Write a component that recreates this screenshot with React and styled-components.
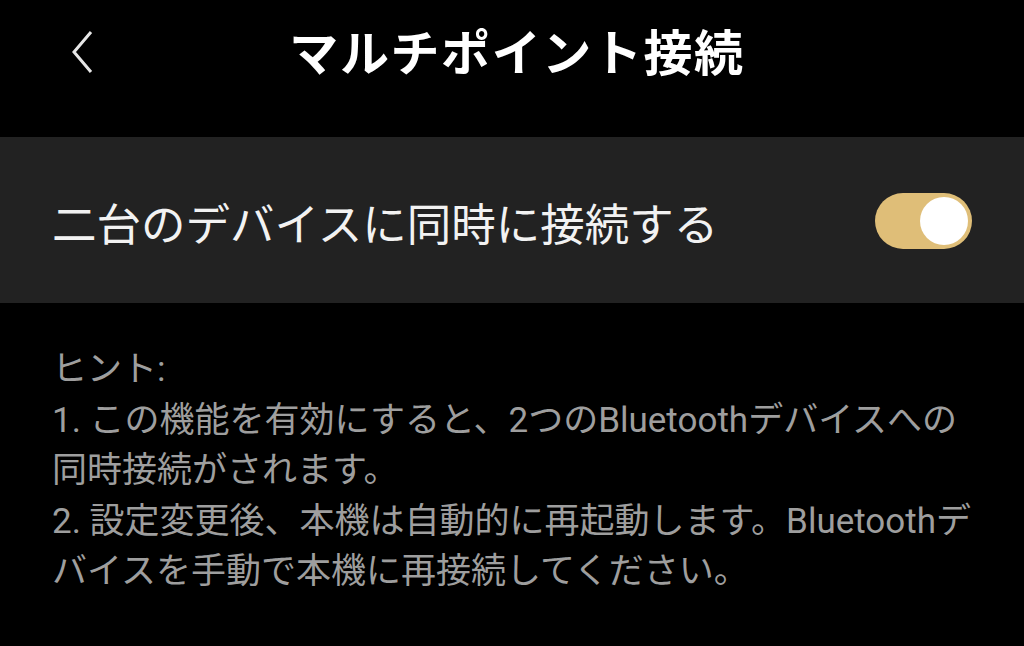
import React from "react";
import styled, { createGlobalStyle } from "styled-components";

const Global = createGlobalStyle`
  html, body { margin: 0; padding: 0; background: #000; }
  body { font-family: "Noto Sans CJK JP", "Noto Sans", sans-serif; }
`;

const Page = styled.div`
  width: 1024px;
  height: 646px;
  background: #000;
  display: flex;
  flex-direction: column;
  overflow: hidden;
`;

const Header = styled.header`
  height: 137px;
  display: flex;
  align-items: center;
  position: relative;
  justify-content: center;
`;

const BackButton = styled.button`
  position: absolute;
  left: 62px;
  top: 26px;
  width: 40px;
  height: 52px;
  background: none;
  border: none;
  padding: 0;
  display: flex;
  align-items: center;
  justify-content: center;
`;

const Title = styled.h1`
  margin: 0;
  margin-top: -38px;
  margin-left: 10px;
  color: #fff;
  font-size: 49px;
  font-weight: 700;
  letter-spacing: 1.6px;
`;

const Row = styled.div`
  height: 166px;
  background: #222222;
  display: flex;
  align-items: center;
  justify-content: space-between;
  padding: 0 52px 0 52px;
`;

const RowLabel = styled.span`
  color: #f2f2f2;
  font-size: 44.5px;
  font-weight: 400;
  margin-top: 2px;
`;

const Toggle = styled.div`
  width: 97px;
  height: 56px;
  border-radius: 28px;
  background: ${(p) => (p.$on ? "#dfbe78" : "#555")};
  position: relative;
  margin-top: 2px;
`;

const Knob = styled.div`
  position: absolute;
  top: 4px;
  left: ${(p) => (p.$on ? "45px" : "4px")};
  width: 48px;
  height: 48px;
  border-radius: 50%;
  background: #fff;
`;

const Hint = styled.div`
  padding: 42px 52px 0 52px;
  color: #9e9e9e;
  font-size: 35px;
  line-height: 50.5px;
  white-space: nowrap;
  font-family: "Roboto", "Noto Sans CJK JP", sans-serif;
`;

export default function App() {
  return (
    <>
      <Global />
      <Page>
        <Header>
          <BackButton aria-label="back">
            <svg width="30" height="46" viewBox="0 0 30 46">
              <path d="M24 3 L7 23 L24 43" fill="none" stroke="#e6e6e6" strokeWidth="3" />
            </svg>
          </BackButton>
          <Title>マルチポイント接続</Title>
        </Header>
        <Row>
          <RowLabel>二台のデバイスに同時に接続する</RowLabel>
          <Toggle $on>
            <Knob $on />
          </Toggle>
        </Row>
        <Hint>
          ヒント:
          <br />
          1. この機能を有効にすると、2つのBluetoothデバイスへの
          <br />
          同時接続がされます。
          <br />
          2. 設定変更後、本機は自動的に再起動します。Bluetoothデ
          <br />
          バイスを手動で本機に再接続してください。
        </Hint>
      </Page>
    </>
  );
}
